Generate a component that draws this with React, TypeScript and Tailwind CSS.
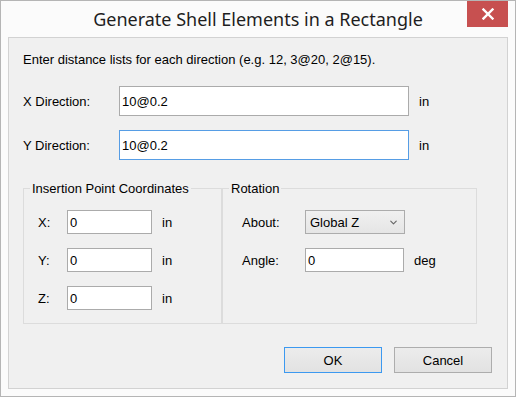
import { ChevronDown } from 'lucide-react';

const font = { fontFamily: '"Liberation Sans", Arial, sans-serif' };

function TextBox({ value, w, h, focused }: { value: string; w: string; h: string; focused?: boolean }) {
  return (
    <div
      className={`${w} ${h} bg-white border ${focused ? 'border-[#569de5]' : 'border-[#ababab]'} flex items-center pl-[2px] text-[13px] text-black`}
    >
      {value}
    </div>
  );
}

export default function App() {
  return (
    <div
      className="w-[516px] h-[397px] border border-[#b5b5b5] bg-[#fbfbfb] flex flex-col text-[13px] leading-[15px] text-black"
      style={font}
    >
      {/* Title bar */}
      <div className="relative h-[36px] flex items-start justify-center">
        <div
          className="mt-[6px] text-[18px] leading-[24px] text-[#1e1e1e]"
          style={{ fontFamily: '"Noto Sans", "Open Sans", sans-serif' }}
        >
          Generate Shell Elements in a Rectangle
        </div>
        <div className="absolute right-[7px] top-0 w-[41px] h-[26px] bg-[#c75050] flex items-center justify-center">
          <svg width="12" height="12" viewBox="0 0 12 12">
            <path d="M1.5 1.5 L10.5 10.5 M10.5 1.5 L1.5 10.5" stroke="white" strokeWidth="2.4" strokeLinecap="square" />
          </svg>
        </div>
      </div>

      {/* Client area */}
      <div className="mx-[7px] h-[352px] border border-[#d2d2d2] bg-[#f0f0f0] flex flex-col pl-[14px] pr-[15px] pt-[14px]">
        <div>Enter distance lists for each direction (e.g. 12, 3@20, 2@15).</div>

        <div className="mt-[19px] flex items-center">
          <div className="w-[96px]">X Direction:</div>
          <TextBox value="10@0.2" w="w-[290px]" h="h-[30px]" />
          <div className="ml-[10px]">in</div>
        </div>

        <div className="mt-[14px] flex items-center">
          <div className="w-[96px]">Y Direction:</div>
          <TextBox value="10@0.2" w="w-[290px]" h="h-[30px]" focused />
          <div className="ml-[10px]">in</div>
        </div>

        <div className="mt-[21px] flex">
          <fieldset className="w-[199px] h-[143px] border border-[#dcdcdc]">
            <legend className="ml-[6px] px-[2px] leading-[15px]">Insertion Point Coordinates</legend>
            <div className="pl-[14px] pt-[14px]">
              {['X:', 'Y:', 'Z:'].map((l, i) => (
                <div key={l} className={`flex items-center ${i > 0 ? 'mt-[14px]' : ''}`}>
                  <div className="w-[29px]">{l}</div>
                  <TextBox value="0" w="w-[85px]" h="h-[24px]" />
                  <div className="ml-[10px]">in</div>
                </div>
              ))}
            </div>
          </fieldset>
          <fieldset className="w-[255px] h-[143px] border border-[#dcdcdc]">
            <legend className="ml-[6px] px-[2px] leading-[15px]">Rotation</legend>
            <div className="pl-[19px] pt-[14px]">
              <div className="flex items-center">
                <div className="w-[63px]">About:</div>
                <div className="w-[100px] h-[24px] border border-[#acacac] bg-gradient-to-b from-[#f0f0f0] to-[#e5e5e5] flex items-center justify-between pl-[4px] pr-[5px]">
                  <span>Global Z</span>
                  <ChevronDown size={11} strokeWidth={2.5} className="text-[#666]" />
                </div>
              </div>
              <div className="mt-[14px] flex items-center">
                <div className="w-[63px]">Angle:</div>
                <TextBox value="0" w="w-[99px]" h="h-[24px]" />
                <div className="ml-[10px]">deg</div>
              </div>
            </div>
          </fieldset>
        </div>

        <div className="mt-[23px] flex justify-end gap-[12px]">
          <button className="w-[98px] h-[26px] border border-[#3c99f0] bg-gradient-to-b from-[#ececec] to-[#e2e2e2] text-[13px]">
            OK
          </button>
          <button className="w-[98px] h-[26px] border border-[#adadad] bg-gradient-to-b from-[#ececec] to-[#e2e2e2] text-[13px]">
            Cancel
          </button>
        </div>
      </div>
    </div>
  );
}
